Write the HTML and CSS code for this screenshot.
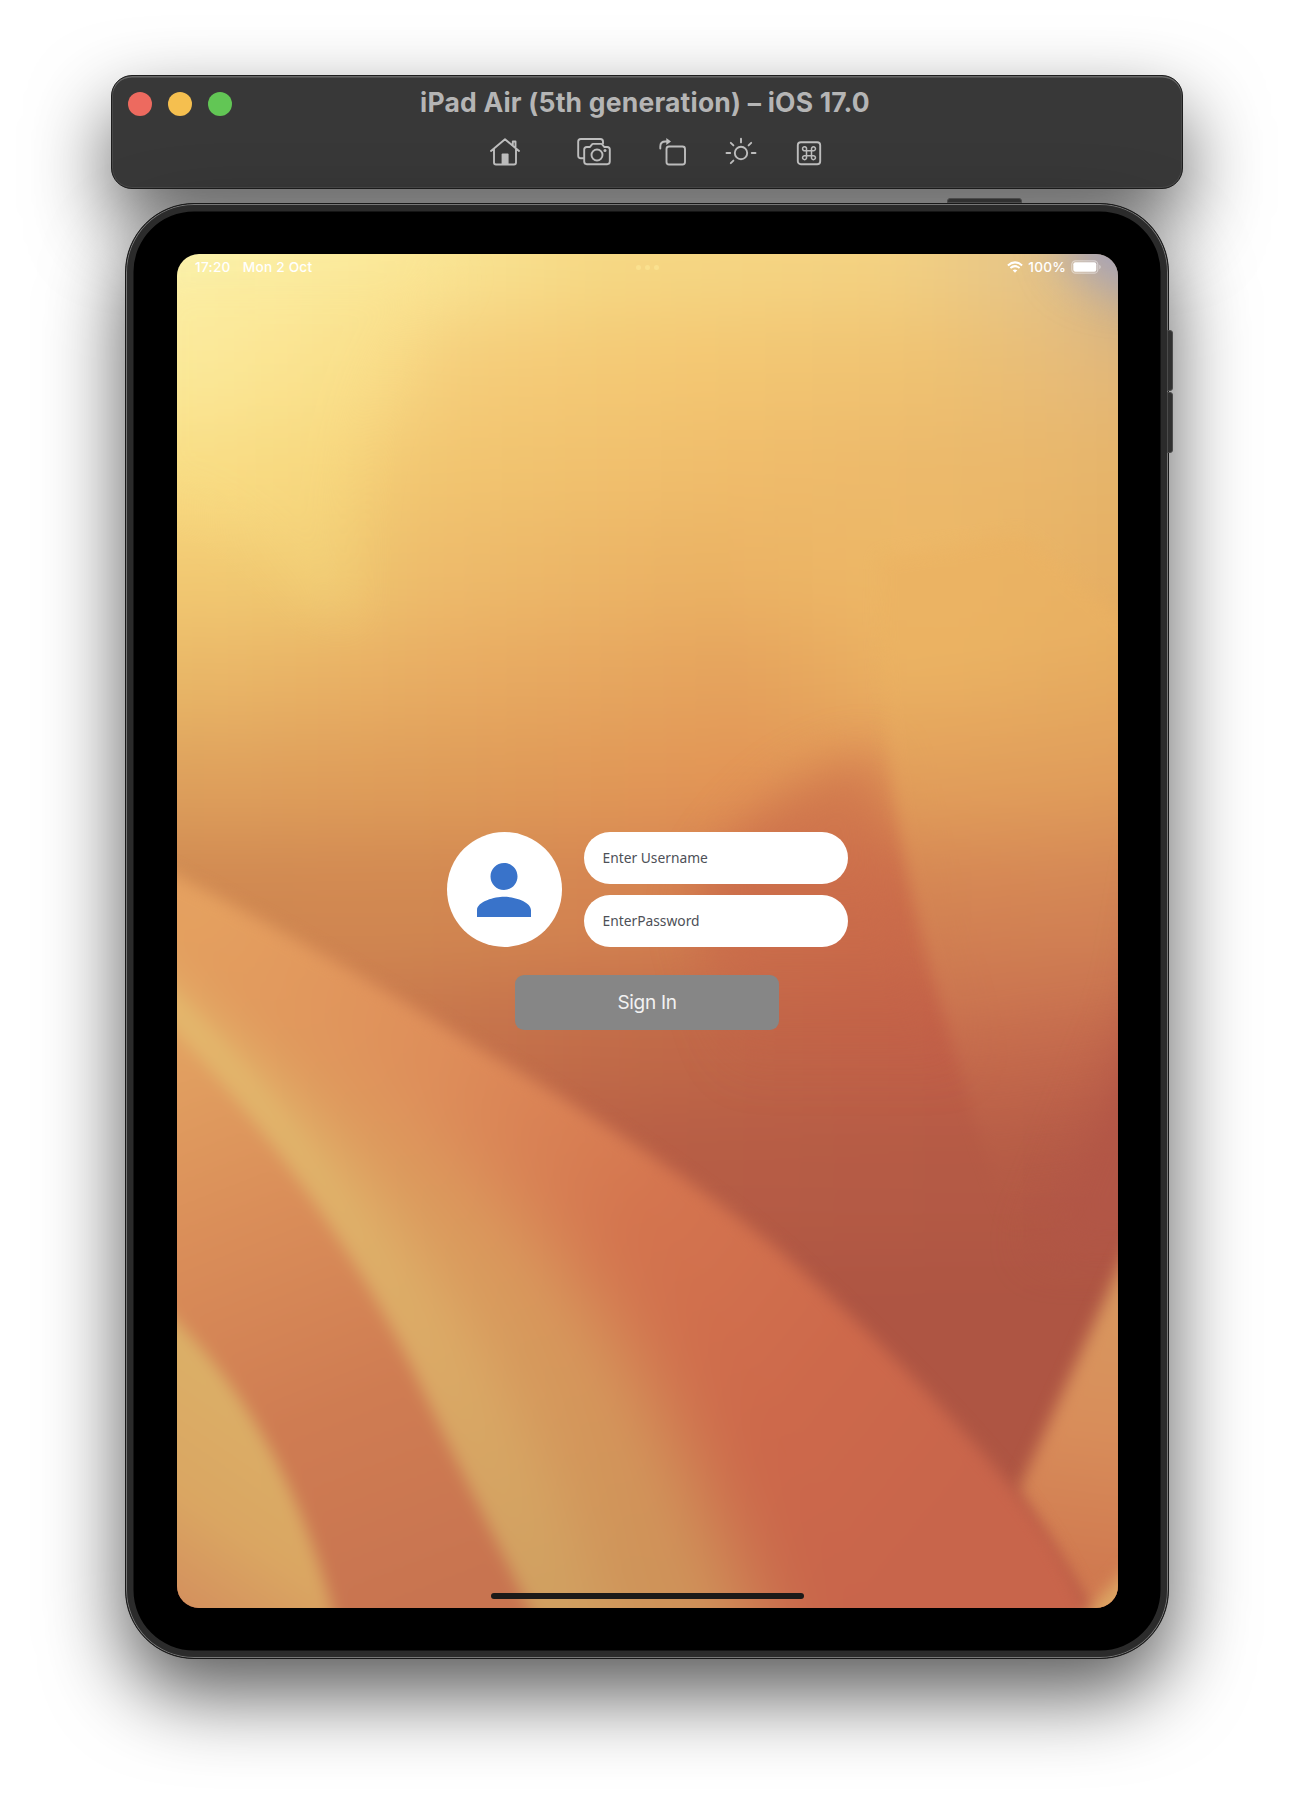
FILE: index.html
```html
<!DOCTYPE html>
<html lang="en">
<head>
<meta charset="utf-8">
<title>iPad Air (5th generation) – iOS 17.0</title>
<link rel="stylesheet" href="styles.css">
</head>
<body>
<header class="toolbar">
  <div class="lights"><i class="light red"></i><i class="light amber"></i><i class="light green"></i></div>
  <div class="heading">
    <h1 class="title">iPad Air (5th generation) – iOS 17.0</h1>
    <nav class="tools">
      <svg class="tool home" width="32" height="30" viewBox="0 0 32 30"><path d="M2 14 16 2.2 30 14M5 12v13.5q0 2 2 2h18q2 0 2-2V12M23.8 8.5V4.5h2.7v6.5"/><path class="solid" d="M12.6 27V17.5q0-1 1-1h5q1 0 1 1V27z"/></svg>
      <svg class="tool camera" width="34" height="30" viewBox="0 0 34 30"><path d="M6.6 21.3H3.8q-2.6 0-2.6-2.6V4.6Q1.200 2 3.800 2h19.600q2.600 0 2.600 2.600v1.800"/><path d="M9.800 10h3.200l1.800-2.400q.5-.7 1.300-.7h8q.8 0 1.300.7L27.200 10h3q2.600 0 2.600 2.600v12q0 2.600-2.600 2.600H9.800q-2.600 0-2.600-2.600v-12Q7.200 10 9.800 10z"/><circle cx="20" cy="18" r="5.500"/><circle class="solid" cx="28" cy="13.500" r="1.500"/></svg>
      <svg class="tool rotate" width="28" height="30" viewBox="0 0 28 30"><rect x="7.500" y="9.500" width="18.500" height="18" rx="2.500"/><path d="M1.300 11.500V9.500Q1.300 4.500 6.500 4.500H8"/><path class="solid" d="M7.300 1 12 4.500 7.300 8z"/></svg>
      <svg class="tool sun" width="32" height="30" viewBox="0 0 32 30"><circle cx="16" cy="16" r="6.200"/><path d="M16 1.800v3.600M1.500 16h3.700M26.800 16h3.700M5.800 5.800l2.600 2.600M26.200 5.800l-2.600 2.600M5.800 26.200l2.600-2.600"/></svg>
      <svg class="tool command" width="26" height="30" viewBox="0 0 26 30"><rect x="1.800" y="5.200" width="22.400" height="22" rx="3"/><path class="thin" d="M10.500 13.700h5v5h-5zM10.500 13.700H9a2 2 0 1 1 1.500-1.500zM15.500 13.700V12a2 2 0 1 1 1.500 1.700zM10.500 18.700v1.500A2 2 0 1 1 9 18.700zM15.500 18.700H17a2 2 0 1 1-1.500 1.500z"/></svg>
    </nav>
  </div>
</header>

<main class="device">
  <i class="key power"></i><i class="key up"></i><i class="key down"></i>
  <section class="screen">
    <svg class="wallpaper" viewBox="152.500 218.500 811 1167" preserveAspectRatio="none">
      <defs>
        <filter id="melt" filterUnits="userSpaceOnUse" x="-100" y="0" width="1350" height="1700" color-interpolation-filters="sRGB"><feGaussianBlur stdDeviation="24 34"/></filter>
        <filter id="soft" filterUnits="userSpaceOnUse" x="0" y="100" width="1150" height="1450" color-interpolation-filters="sRGB"><feGaussianBlur stdDeviation="7"/></filter>
        <filter id="hazy" filterUnits="userSpaceOnUse" x="0" y="100" width="1150" height="1450" color-interpolation-filters="sRGB"><feGaussianBlur stdDeviation="20"/></filter>
        <filter id="mist" filterUnits="userSpaceOnUse" x="0" y="100" width="1150" height="1500" color-interpolation-filters="sRGB"><feGaussianBlur stdDeviation="34"/></filter>
        <clipPath id="petal-shape"><path d="M80 718Q250 800 411 902 560 987 669 1075 780 1172 871 1280 925 1345 948 1420H80z"/></clipPath>
        <linearGradient id="r1"><stop offset="0" stop-color="#fcf5b0"/><stop offset=".25" stop-color="#fbe898"/><stop offset=".45" stop-color="#f6d985"/><stop offset=".75" stop-color="#f4d282"/><stop offset=".93" stop-color="#e3c38b"/><stop offset="1" stop-color="#ceb592"/></linearGradient>
        <linearGradient id="r2"><stop offset="0" stop-color="#fceea0"/><stop offset=".18" stop-color="#fae18d"/><stop offset=".3" stop-color="#f5cd7a"/><stop offset=".55" stop-color="#f4c772"/><stop offset=".8" stop-color="#efc272"/><stop offset="1" stop-color="#e4b97b"/></linearGradient>
        <linearGradient id="r3"><stop offset="0" stop-color="#fade84"/><stop offset=".15" stop-color="#f7d67c"/><stop offset=".26" stop-color="#f2c671"/><stop offset=".6" stop-color="#f0bc6b"/><stop offset="1" stop-color="#e8b66b"/></linearGradient>
        <linearGradient id="r4"><stop offset="0" stop-color="#f3ca73"/><stop offset=".16" stop-color="#efc970"/><stop offset=".26" stop-color="#eebc6c"/><stop offset=".55" stop-color="#ebb264"/><stop offset=".8" stop-color="#eeb967"/><stop offset="1" stop-color="#e7b065"/></linearGradient>
        <linearGradient id="r5"><stop offset="0" stop-color="#eab868"/><stop offset=".3" stop-color="#e8ab62"/><stop offset=".6" stop-color="#e5a25c"/><stop offset=".8" stop-color="#ebb363"/><stop offset="1" stop-color="#e3a85f"/></linearGradient>
        <linearGradient id="r6"><stop offset="0" stop-color="#dfa15d"/><stop offset=".3" stop-color="#df9c59"/><stop offset=".58" stop-color="#e39556"/><stop offset="1" stop-color="#df995b"/></linearGradient>
        <linearGradient id="r7"><stop offset="0" stop-color="#d08851"/><stop offset=".25" stop-color="#d18851"/><stop offset=".5" stop-color="#d58351"/><stop offset=".75" stop-color="#cb6d4a"/><stop offset="1" stop-color="#cf7951"/></linearGradient>
        <linearGradient id="r8"><stop offset=".3" stop-color="#c8784d"/><stop offset=".5" stop-color="#c16a48"/><stop offset=".72" stop-color="#c26048"/><stop offset="1" stop-color="#bc5f4a"/></linearGradient>
        <linearGradient id="r9"><stop offset=".4" stop-color="#b85f45"/><stop offset=".75" stop-color="#b45a45"/><stop offset="1" stop-color="#b15747"/></linearGradient>
        <linearGradient id="dome" gradientUnits="userSpaceOnUse" x1="730" y1="640" x2="730" y2="930"><stop offset="0" stop-color="#d58350"/><stop offset=".4" stop-color="#cc6e4b"/><stop offset="1" stop-color="#c05d46" stop-opacity="0"/></linearGradient>
        <linearGradient id="fold" gradientUnits="userSpaceOnUse" x1="830" y1="560" x2="900" y2="1060"><stop offset="0" stop-color="#ebb262"/><stop offset=".25" stop-color="#e2a15c"/><stop offset=".6" stop-color="#cf7e54"/><stop offset="1" stop-color="#b45a47" stop-opacity="0"/></linearGradient>
        <linearGradient id="petal" gradientUnits="userSpaceOnUse" x1="160" y1="800" x2="800" y2="1330"><stop offset="0" stop-color="#e5a160"/><stop offset=".3" stop-color="#de8d5a"/><stop offset=".55" stop-color="#d4754f"/><stop offset=".8" stop-color="#cd694b"/><stop offset="1" stop-color="#c8654b"/></linearGradient>
        <linearGradient id="glow" gradientUnits="userSpaceOnUse" x1="200" y1="850" x2="480" y2="1385"><stop offset="0" stop-color="#e29d60"/><stop offset=".5" stop-color="#da9c5e"/><stop offset="1" stop-color="#cf945a"/></linearGradient>
        <linearGradient id="rim" gradientUnits="userSpaceOnUse" x1="160" y1="860" x2="480" y2="1385"><stop offset="0" stop-color="#e4b96d"/><stop offset=".6" stop-color="#dbaa66"/><stop offset="1" stop-color="#d09f60"/></linearGradient>
        <linearGradient id="under" gradientUnits="userSpaceOnUse" x1="160" y1="900" x2="350" y2="1385"><stop offset="0" stop-color="#e2a161"/><stop offset=".3" stop-color="#da8e59"/><stop offset=".65" stop-color="#cf7c52"/><stop offset="1" stop-color="#c87450"/></linearGradient>
        <linearGradient id="leaf" gradientUnits="userSpaceOnUse" x1="260" y1="1230" x2="150" y2="1390"><stop offset="0" stop-color="#dbaf67"/><stop offset=".55" stop-color="#daa662"/><stop offset="1" stop-color="#d38e5d"/></linearGradient>
        <linearGradient id="tip" gradientUnits="userSpaceOnUse" x1="945" y1="1110" x2="915" y2="1350"><stop offset="0" stop-color="#d8985f"/><stop offset=".5" stop-color="#d88d5a"/><stop offset="1" stop-color="#d07a50"/></linearGradient>
      </defs>
      <g filter="url(#melt)">
        <rect x="152" y="80" width="812" height="190" fill="url(#r1)"/><path d="M964 80h150v190h-150z" fill="#b3a79c"/><path d="M0 80h152v190H0z" fill="#fcf5b0"/>
        <rect x="152" y="270" width="812" height="90" fill="url(#r2)"/><path d="M0 270h152v90H0z" fill="#fceea0"/><path d="M964 270h150v90h-150z" fill="#e2b779"/>
        <rect x="152" y="360" width="812" height="90" fill="url(#r3)"/><path d="M0 360h152v90H0z" fill="#fade84"/><path d="M964 360h150v90h-150z" fill="#e6b46a"/>
        <rect x="152" y="450" width="812" height="90" fill="url(#r4)"/><path d="M0 450h152v90H0z" fill="#f3ca73"/><path d="M964 450h150v90h-150z" fill="#e6af63"/>
        <rect x="152" y="540" width="812" height="90" fill="url(#r5)"/><path d="M0 540h152v90H0z" fill="#eab868"/><path d="M964 540h150v90h-150z" fill="#e3a85f"/>
        <rect x="152" y="630" width="812" height="90" fill="url(#r6)"/><path d="M0 630h152v90H0z" fill="#dfa15d"/><path d="M964 630h150v90h-150z" fill="#dd945a"/>
        <rect x="152" y="720" width="812" height="120" fill="url(#r7)"/><path d="M0 720h152v120H0z" fill="#d08851"/><path d="M964 720h150v120h-150z" fill="#cc7351"/>
        <rect x="0" y="840" width="1114" height="110" fill="url(#r8)"/>
        <rect x="0" y="950" width="1114" height="120" fill="url(#r9)"/>
        <rect x="0" y="1070" width="1114" height="500" fill="#ae5543"/>
      </g>
      <ellipse cx="980" cy="210" rx="62" ry="36" fill="#a5a2b8" filter="url(#hazy)"/>
      <path d="M400 230Q290 330 305 540L270 520Q180 420 120 430V230z" fill="#fbe08a" opacity=".25" filter="url(#hazy)"/>
      <path d="M600 780Q660 665 755 650L790 800 850 960H640z" fill="url(#dome)" filter="url(#hazy)"/>
      <path d="M758 480Q755 660 800 830L868 1060H920L1000 820V560L880 460z" fill="url(#fold)" filter="url(#soft)" opacity=".65"/>
      <path d="M1010 690 980 860 890 1080H1050z" fill="#b25547" opacity=".6" filter="url(#hazy)"/>
      <path d="M1000 1014 877 1285 960 1420H1060z" fill="url(#tip)" filter="url(#soft)"/>
      <g filter="url(#soft)">
        <g clip-path="url(#petal-shape)">
          <path d="M60 700H980V1430H60z" fill="url(#petal)"/>
          <path d="M100 800C260 890 420 1010 500 1110Q600 1240 690 1500H500Q400 1100 100 850z" fill="url(#glow)" filter="url(#mist)"/>
          <path d="M100 815C250 930 330 1030 400 1130Q500 1280 560 1480H470Q330 1080 100 850z" fill="url(#rim)" filter="url(#hazy)"/>
          <path d="M110 815C230 925 300 1020 372 1150Q450 1280 505 1430H430Q310 1060 110 870z" fill="url(#rim)"  opacity=".7"/>
        </g>
        <path d="M100 838C230 960 320 1100 366 1202 405 1285 440 1350 472 1420H80z" fill="url(#under)"/>
        <path d="M100 1093Q245 1200 295 1420H80z" fill="url(#leaf)"/>
        <path d="M920 1410 985 1335V1410z" fill="#dda764"/>
      </g>
    </svg>
    <div class="status">
      <span class="time">17:20</span><span class="date">Mon 2 Oct</span>
      <span class="dots"><i></i><i></i><i></i></span>
      <svg class="wifi" width="16" height="12" viewBox="0 0 16 12"><path d="M.900 4.400Q8-1.700 15.100 4.400M3.400 7Q8 3.200 12.600 7"/><path class="fan" d="M5.700 9.300Q8 7.500 10.300 9.300L8 11.800z"/></svg>
      <span class="percent">100%</span>
      <svg class="battery" width="30" height="14" viewBox="0 0 30 14"><rect class="shell" x=".8" y=".8" width="26" height="12.400" rx="3.800"/><rect x="2.300" y="2.300" width="23" height="9.400" rx="2"/><path class="nub" d="M28.300 4.700q1.400.7 1.400 2.300t-1.400 2.300z"/></svg>
    </div>
    <form class="login">
      <div class="credentials">
        <div class="avatar"><svg width="54" height="54" viewBox="4 4 16 16"><path d="M12 12c2.210 0 4-1.790 4-4s-1.790-4-4-4-4 1.790-4 4 1.790 4 4 4zm0 2c-2.670 0-8 1.340-8 4v2h16v-2c0-2.660-5.330-4-8-4z"/></svg></div>
        <div class="fields"><div class="field">Enter Username</div><div class="field">EnterPassword</div></div>
      </div>
      <button class="submit" type="button">Sign In</button>
    </form>
    <div class="indicator"></div>
  </section>
</main>
</body>
</html>
```
FILE: styles.css
```css
* { box-sizing: border-box; }
body {
  margin: 0;
  height: 1820px;
  padding-top: 75px;
  display: flex;
  flex-direction: column;
  align-items: center;
  gap: 14px;
  overflow: hidden;
  background: #fff;
  font-family: Inter, "Liberation Sans", sans-serif;
}
.toolbar {
  width: 1072px;
  height: 114px;
  flex: none;
  display: grid;
  grid-template-columns: 170px 1fr 170px;
  border-radius: 21px;
  background: #383838;
  border: 1px solid #1d1d1d;
  box-shadow: inset 0 1.5px 0 #686868, inset 0 0 0 1px #484848, 0 35px 80px rgba(0,0,0,.63);
}
.lights { display: flex; gap: 16px; padding: 16px 0 0 16px; }
.light { width: 24px; height: 24px; border-radius: 50%; }
.red { background: #ed6a5f; }
.amber { background: #f5bf4f; }
.green { background: #62c655; }
.heading { display: flex; flex-direction: column; align-items: center; }
.title {
  margin: 9px 4px 0 0;
  font-size: 26.5px;
  line-height: 34px;
  font-weight: 700;
  letter-spacing: .2px;
  color: #b5b5b5;
  white-space: nowrap;
}
.tools { display: flex; align-self: stretch; margin: 18px 0 0 207px; }
.tool { fill: none; stroke: #bebebe; stroke-width: 1.9; stroke-linecap: round; stroke-linejoin: round; }
.tool .solid { fill: #bebebe; stroke: none; }
.tool .thin { stroke-width: 1.5; }
.camera { margin-left: 56px; }
.rotate { margin-left: 48px; }
.sun { margin-left: 38px; }
.command { margin-left: 39px; }

.device {
  position: relative;
  flex: none;
  width: 1044px;
  height: 1456px;
  padding: 50px 51px;
  border-radius: 69px;
  background: #000;
  border: 1px solid #191919;
  box-shadow: inset 0 0 0 1px #777, inset 0 0 0 7.5px #2b2b2b, 0 35px 80px rgba(0,0,0,.65);
}
.key { position: absolute; background: #303030; border: 1.5px solid #4b4b4b; border-radius: 3px 3px 0 0; }
.power { left: 821px; top: -6px; width: 75px; height: 5px; }
.up, .down { left: 1041px; width: 6px; border-radius: 0 3px 3px 0; }
.up { top: 126px; height: 61px; }
.down { top: 188px; height: 61px; }
.screen {
  position: relative;
  width: 941px;
  height: 1354px;
  border-radius: 22px;
  overflow: hidden;
  display: flex;
  flex-direction: column;
  align-items: center;
}
.wallpaper { position: absolute; inset: 0; width: 100%; height: 100%; }
.status {
  position: relative;
  width: 100%;
  height: 26px;
  padding: 0 17px 0 18px;
  display: flex;
  align-items: center;
  color: #fff;
  fill: #fff;
  font-size: 13.7px;
  font-weight: 500;
}
.time { letter-spacing: .25px; }
.date { margin-left: 12px; letter-spacing: .2px; }
.dots { position: absolute; left: 459px; top: 11px; display: flex; gap: 4px; }
.dots i { width: 5px; height: 5px; border-radius: 50%; background: #fae18f; }
.wifi { margin-left: auto; }
.wifi path { fill: none; stroke: #fff; stroke-width: 2; }
.wifi .fan { fill: #fff; stroke: none; }
.percent { margin: 0 5px; letter-spacing: .2px; }
.battery .shell { fill: none; stroke: #fff; stroke-opacity: .45; stroke-width: 1.2; }
.battery .nub { opacity: .5; }
.login { position: relative; margin-top: 552px; display: flex; flex-direction: column; align-items: center; gap: 28px; }
.credentials { display: flex; gap: 22px; margin-right: 1px; }
.avatar { width: 115px; height: 115px; border-radius: 50%; background: #fff; display: flex; align-items: center; justify-content: center; }
.avatar svg { fill: #3973ca; }
.fields { display: flex; flex-direction: column; justify-content: space-between; }
.field {
  width: 264px;
  height: 52px;
  padding-left: 19px;
  border-radius: 26px;
  background: #fff;
  color: #4d5057;
  font: 13.8px/52px "Noto Sans", sans-serif;
}
.submit {
  width: 264px;
  height: 55px;
  margin-right: 1px;
  padding: 1px 0 0;
  border: 0;
  border-radius: 9px;
  background: #868686;
  color: #f2f2f2;
  font: 400 19px/54px Inter, sans-serif;
  letter-spacing: -.3px;
}
.indicator { position: relative; margin: auto 0 9px; width: 313px; height: 6px; border-radius: 3px; background: #1c1a19; }
```
